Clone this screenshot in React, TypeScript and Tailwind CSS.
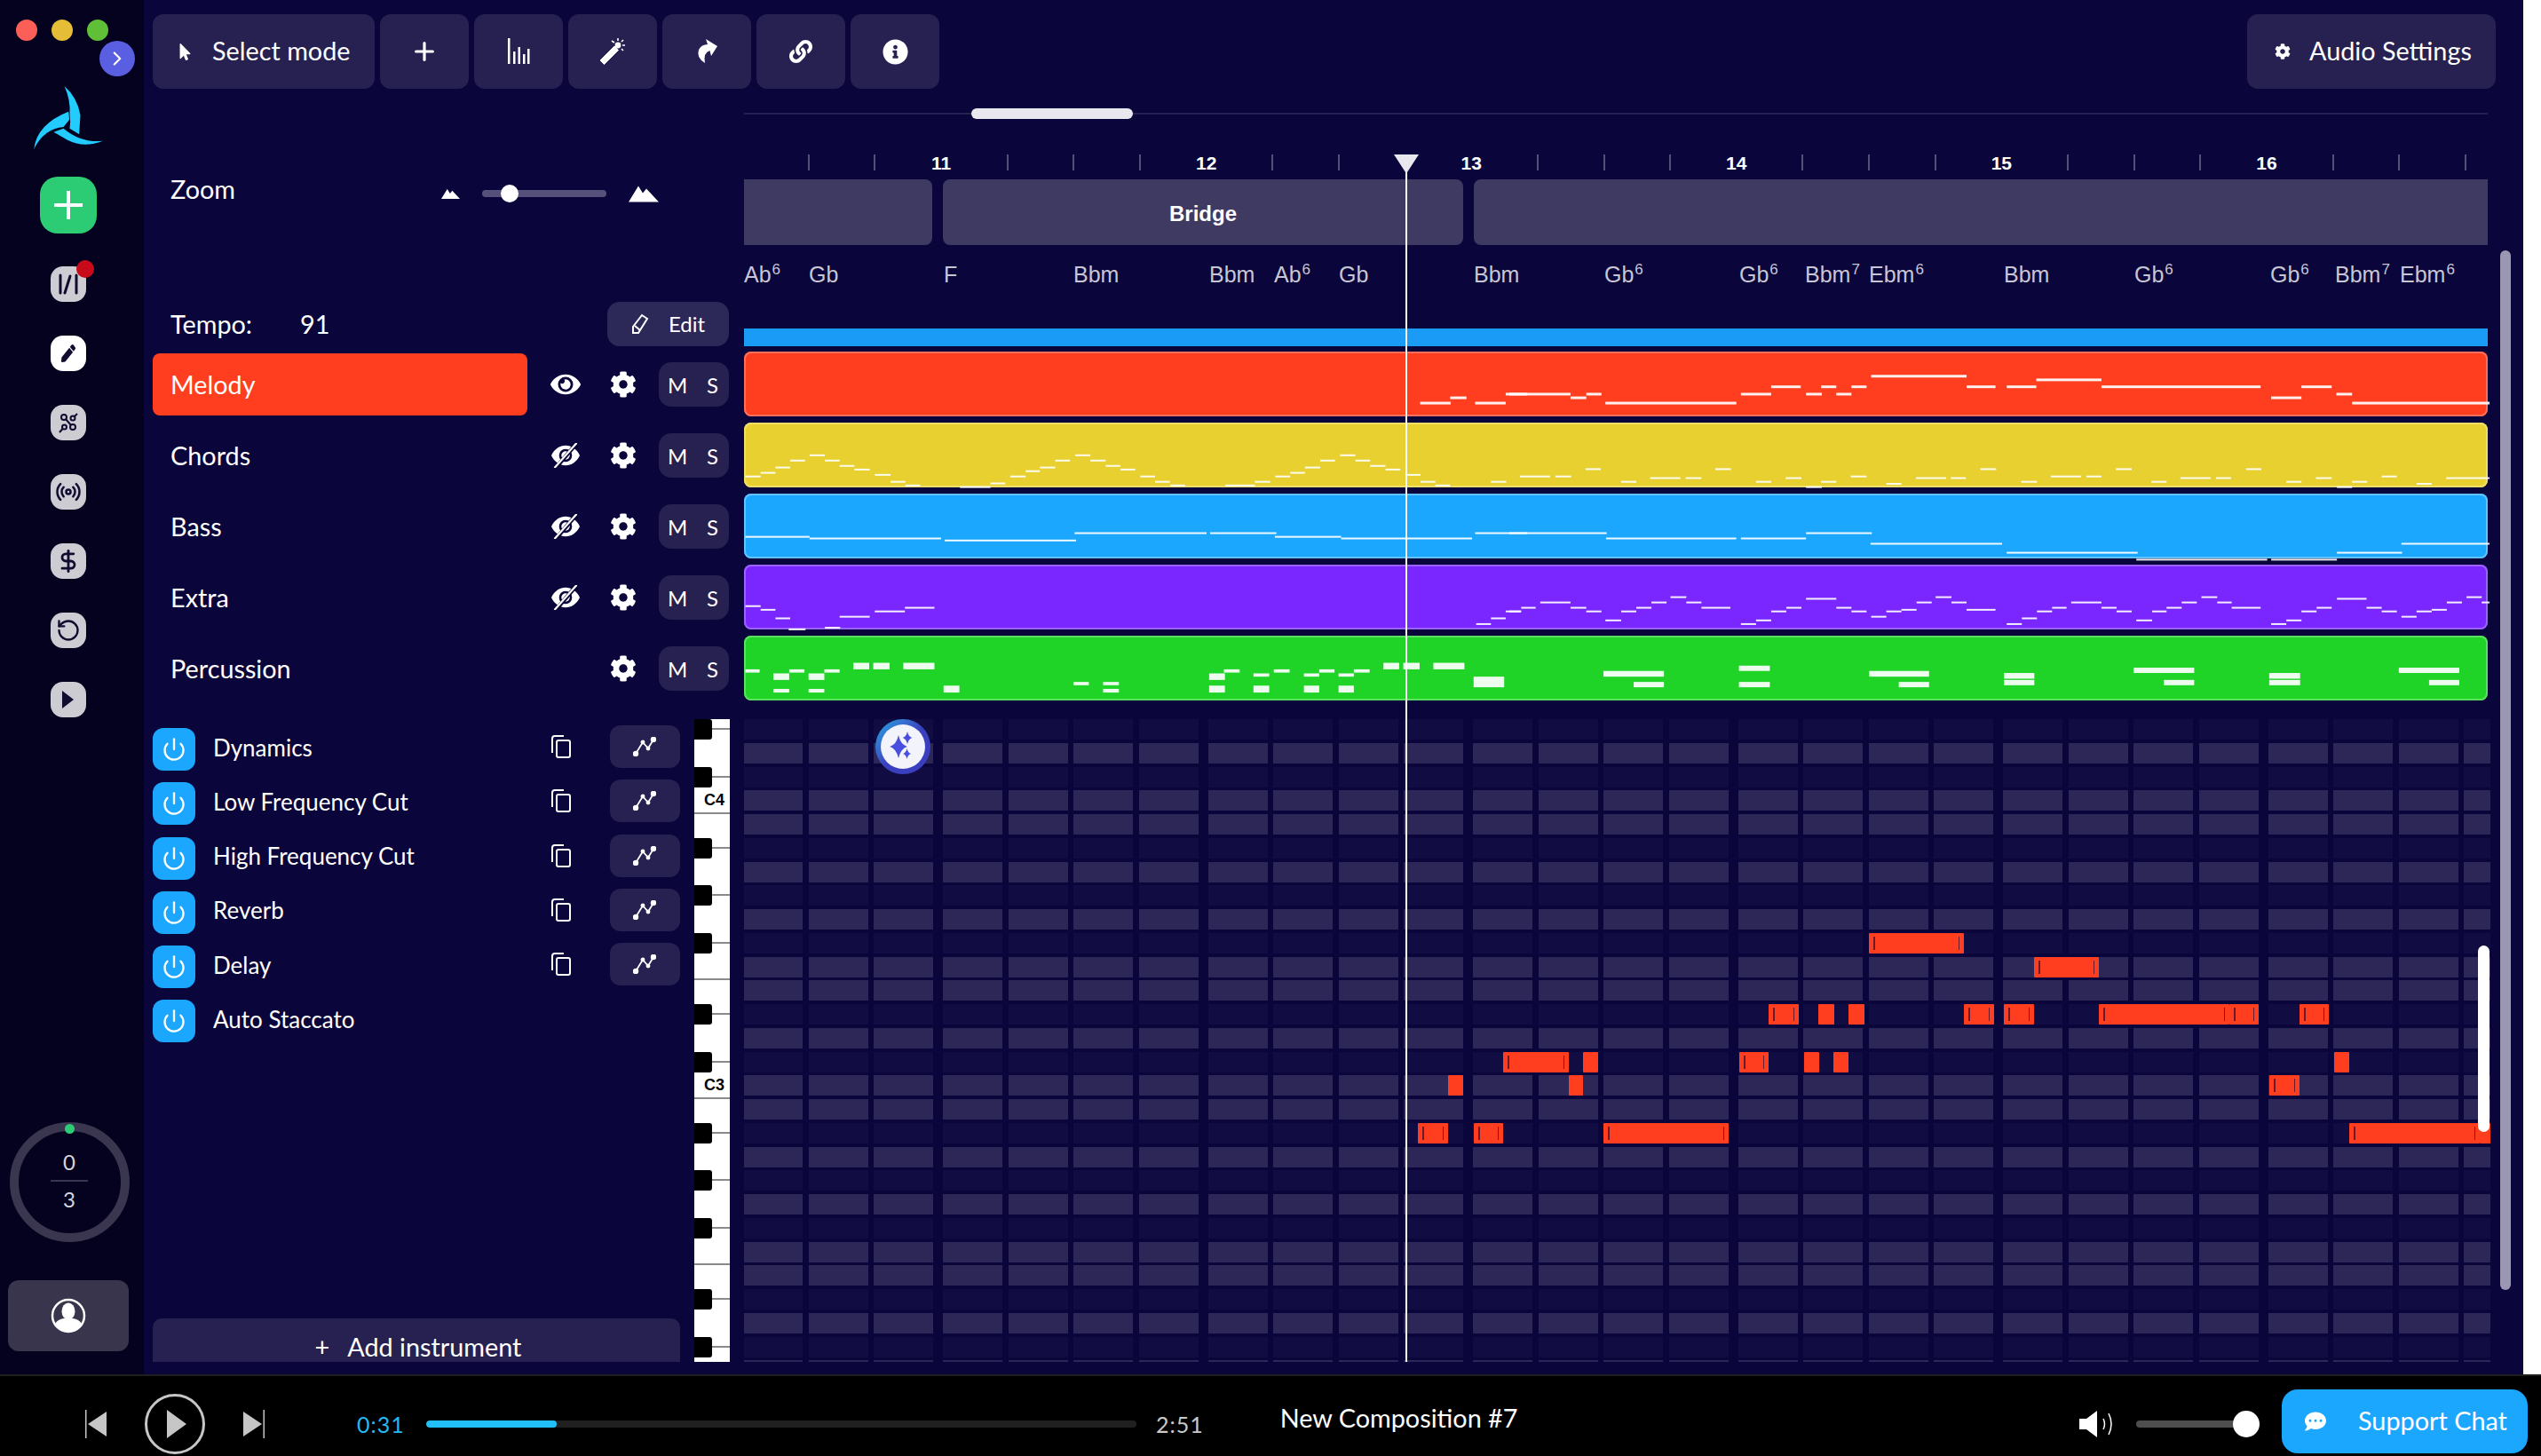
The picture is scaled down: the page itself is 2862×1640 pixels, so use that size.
import React from "react";
import { FaEye, FaCog, FaMousePointer, FaLink, FaInfoCircle, FaPen, FaCommentDots } from "react-icons/fa";
import { Radio, DollarSign, RotateCcw, Power, Plus, ChevronRight } from "lucide-react";

const zx4 = (z: number) => 820 + z * 0.574;
const zx5 = (z: number) => 1700 + z * 0.741;
const zy = (z: number) => 100 + z * 0.4592;

type N = [number, number, number];
type R = [number, number, number, number];

const melody4: N[] = [[1358,1418,771],[1417,1449,758],[1466,1526,771],[1526,1568,749]];
const melody5: N[] = [[0,93,749],[93,117,758],[117,140,749],[146,345,771],[352,398,749],[398,443,731],[451,475,749],[474,497,731],[497,520,749],[520,543,731],[550,695,705],[695,739,731],[756,801,731],[801,900,714],[900,1142,731],[1158,1204,758],[1204,1250,731],[1257,1281,749],[1281,1490,771]];
const chords4: N[] = [[34,64,951],[64,93,942],[93,122,929],[122,151,912],[160,190,899],[190,219,912],[219,248,925],[248,278,934],[288,319,947],[319,348,964],[348,377,973],[455,515,977],[515,544,968],[554,584,951],[584,612,938],[612,642,929],[642,671,912],[681,711,899],[711,741,912],[741,770,925],[770,799,934],[809,838,951],[838,867,964],[868,897,973],[976,1034,973],[1034,1064,964],[1074,1103,951],[1103,1132,942],[1132,1162,929],[1162,1191,912],[1201,1231,899],[1231,1260,912],[1260,1290,925],[1290,1319,934],[1329,1359,947],[1359,1388,964],[1388,1417,973],[1497,1527,964]];
const chords5: N[] = [[16,62,951],[70,94,951],[116,139,933],[170,193,964],[214,260,955],[268,292,955],[313,337,933],[375,398,964],[420,444,955],[451,475,977],[474,497,964],[519,543,951],[573,596,969],[618,664,955],[671,694,955],[716,740,933],[778,802,964],[823,869,951],[877,900,951],[922,946,933],[976,999,964],[1020,1066,955],[1074,1097,955],[1120,1143,933],[1181,1204,964],[1226,1250,955],[1258,1281,977],[1281,1304,964],[1326,1349,951],[1379,1402,969],[1424,1490,955]];
const bass4: N[] = [[34,160,1099],[160,418,1103],[425,683,1108],[680,939,1090],[946,1076,1090],[1073,1203,1099],[1203,1460,1103],[1466,1568,1090]];
const bass5: N[] = [[0,148,1090],[147,345,1103],[352,451,1103],[451,551,1090],[549,749,1116],[756,955,1138],[953,1152,1155],[1158,1258,1155],[1258,1357,1138],[1356,1490,1116]];
const extra4: N[] = [[34,64,1269],[64,93,1278],[93,122,1299],[119,152,1326],[190,220,1322],[219,278,1295],[288,347,1282],[347,405,1273],[1468,1497,1313],[1497,1526,1299],[1526,1556,1282]];
const extra5: N[] = [[0,18,1282],[18,40,1273],[47,93,1260],[93,117,1273],[117,140,1282],[146,170,1304],[170,193,1282],[193,216,1273],[216,239,1260],[245,269,1247],[269,292,1260],[292,336,1273],[352,375,1313],[375,398,1304],[398,421,1282],[421,444,1273],[451,497,1251],[497,520,1273],[520,543,1282],[550,573,1295],[573,596,1282],[596,619,1278],[619,642,1260],[648,672,1247],[672,695,1260],[695,739,1278],[756,779,1313],[779,802,1299],[802,825,1282],[825,847,1273],[854,900,1260],[900,923,1273],[923,946,1282],[953,977,1304],[977,999,1282],[999,1022,1273],[1022,1045,1260],[1052,1076,1247],[1076,1098,1260],[1098,1142,1273],[1158,1181,1313],[1181,1204,1304],[1204,1227,1282],[1227,1250,1273],[1258,1303,1251],[1303,1326,1273],[1326,1349,1282],[1356,1379,1295],[1379,1402,1282],[1402,1425,1278],[1425,1448,1260],[1455,1478,1247],[1478,1490,1260]];
const perc4: R[] = [[34,62,1424,1432],[89,120,1434,1450],[120,150,1424,1432],[158,189,1434,1450],[189,219,1424,1432],[246,277,1408,1424],[285,317,1408,1424],[344,405,1408,1424],[89,120,1472,1481],[158,189,1472,1481],[423,454,1464,1481],[678,708,1455,1463],[736,767,1455,1463],[736,767,1472,1481],[944,975,1434,1450],[973,1004,1424,1432],[1031,1062,1434,1442],[1071,1102,1424,1432],[1130,1160,1434,1442],[1160,1190,1424,1432],[1198,1228,1434,1442],[1228,1259,1424,1432],[1286,1317,1408,1424],[1325,1357,1408,1424],[1384,1445,1408,1424],[944,975,1464,1481],[1031,1062,1464,1481],[1130,1160,1464,1481],[1198,1228,1464,1481],[1463,1523,1442,1468]];
const perc5: R[] = [[143,235,1428,1442],[189,235,1455,1468],[349,396,1415,1428],[349,396,1455,1468],[547,638,1428,1442],[592,638,1455,1468],[752,798,1433,1447],[752,798,1450,1463],[949,1041,1420,1433],[995,1041,1450,1463],[1155,1202,1433,1447],[1155,1202,1450,1463],[1352,1444,1420,1433],[1398,1444,1450,1463]];

const toRects = (a: N[], b: N[], h: number) => [
  ...a.map(([x1, x2, y]) => ({ x: zx4(x1), w: zx4(x2) - zx4(x1), y: zy(y) - h / 2, h })),
  ...b.map(([x1, x2, y]) => ({ x: zx5(x1), w: zx5(x2) - zx5(x1), y: zy(y) - h / 2, h })),
];
const percRects = [
  ...perc4.map(([x1, x2, y1, y2]) => ({ x: zx4(x1), w: zx4(x2) - zx4(x1), y: zy(y1), h: zy(y2) - zy(y1) })),
  ...perc5.map(([x1, x2, y1, y2]) => ({ x: zx5(x1), w: zx5(x2) - zx5(x1), y: zy(y1), h: zy(y2) - zy(y1) })),
];

const tracks = [
  { y: 396, cls: "bg-[#ff3e20] ring-[#ff6f5c]", rects: toRects(melody4, melody5, 3) },
  { y: 476, cls: "bg-[#e8d030] ring-[#efdf68]", rects: toRects(chords4, chords5, 2) },
  { y: 556, cls: "bg-[#1ca7ff] ring-[#62c2ff]", rects: toRects(bass4, bass5, 2) },
  { y: 636, cls: "bg-[#7a27ff] ring-[#9a62ff]", rects: toRects(extra4, extra5, 2) },
  { y: 716, cls: "bg-[#1fd427] ring-[#5be062]", rects: percRects },
];

const notes: [number, number, number][] = [
  [9,2105,2212],[10,2291,2364],
  [12,1992,2026],[12,2048,2066],[12,2082,2100],[12,2212,2246],[12,2257,2291],[12,2364,2511],[12,2511,2544],[12,2590,2623],
  [14,1693,1767],[14,1783,1800],[14,1959,1992],[14,2032,2049],[14,2065,2082],[14,2629,2646],
  [15,1631,1648],[15,1767,1783],[15,2556,2590],
  [17,1597,1631],[17,1660,1693],[17,1806,1947],[17,2646,2793],[17,2793,2806],
];

const darkRows = new Set([0, 2, 5, 7, 9, 12, 14, 17, 19, 21, 24, 26]);
const lineRows = new Set([3, 10, 15, 22]);
const rows = Array.from({ length: 28 }, (_, i) => i);
const cols = Array.from({ length: 27 }, (_, i) => i);

const chords: { x: number; n: string; s?: string }[] = [
  { x: 838, n: "Ab", s: "6" }, { x: 911, n: "Gb" }, { x: 1063, n: "F" }, { x: 1209, n: "Bbm" }, { x: 1362, n: "Bbm" },
  { x: 1435, n: "Ab", s: "6" }, { x: 1508, n: "Gb" }, { x: 1660, n: "Bbm" }, { x: 1807, n: "Gb", s: "6" }, { x: 1959, n: "Gb", s: "6" },
  { x: 2033, n: "Bbm", s: "7" }, { x: 2105, n: "Ebm", s: "6" }, { x: 2257, n: "Bbm" }, { x: 2404, n: "Gb", s: "6" }, { x: 2557, n: "Gb", s: "6" },
  { x: 2630, n: "Bbm", s: "7" }, { x: 2703, n: "Ebm", s: "6" },
];

const Btn = ({ children, cls }: { children: React.ReactNode; cls?: string }) => (
  <div className={`h-[84px] rounded-[12px] bg-[#272152] flex items-center text-white ${cls ?? "w-[100px] justify-center"}`}>{children}</div>
);

const Mountains = ({ w, h }: { w: number; h: number }) => (
  <svg width={w} height={h} viewBox="0 0 34 18" fill="white"><path d="M0 18 L11 0 L16 8 L20 3 L34 18 Z" /></svg>
);

const EyeOff = () => (
  <svg width="34" height="28" viewBox="0 0 34 28">
    <path d="M1 14 C8 -1 26 -1 33 14 C26 29 8 29 1 14 Z" fill="white" />
    <circle cx="17" cy="14" r="6" fill="none" stroke="#0a053a" strokeWidth="2.6" />
    <path d="M6 28 L29 1" stroke="#0a053a" strokeWidth="4.4" />
    <path d="M5 27.5 L29 0.5" stroke="white" strokeWidth="2.2" strokeLinecap="round" />
  </svg>
);

const SideIcon = ({ children, white }: { children: React.ReactNode; white?: boolean }) => (
  <div className={`relative w-[40px] h-[40px] rounded-[14px] flex items-center justify-center text-[#100c30] ${white ? "bg-white" : "bg-[#cdccd2]"}`}>{children}</div>
);

const Track = ({ name, eye, active }: { name: string; eye?: "on" | "off"; active?: boolean }) => (
  <div className="flex items-center h-[70px] text-white">
    <div className={`w-[422px] h-[70px] rounded-[8px] pl-[20px] pt-[2px] flex items-center text-[28.8px] ${active ? "bg-[#ff3e20]" : ""}`}>{name}</div>
    <div className="ml-[26px] w-[34px] flex justify-center">
      {eye === "on" && <FaEye size={36} />}
      {eye === "off" && <EyeOff />}
    </div>
    <div className="ml-[32px] w-[32px] flex justify-center"><FaCog size={30} /></div>
    <div className="ml-[24px] w-[79px] h-[50px] rounded-[14px] bg-[#272152] flex items-center justify-between pl-[10px] pr-[12px] text-[24px] pt-[1px]">
      <span>M</span><span>S</span>
    </div>
  </div>
);

const Effect = ({ name, tools = true }: { name: string; tools?: boolean }) => (
  <div className="flex items-center h-[48px] text-white">
    <div className="w-[48px] h-[48px] rounded-[12px] bg-[#1ca7ff] flex items-center justify-center shrink-0"><Power size={28} strokeWidth={2} /></div>
    <div className="ml-[20px] text-[26px] w-[383px] mb-[4px]">{name}</div>
    {tools && (
      <>
        <div className="mb-[6px] w-[24px]">
          <svg width="24" height="26" viewBox="0 0 24 26" fill="none" stroke="white" strokeWidth="2">
            <rect x="7" y="6" width="15" height="19" rx="2" />
            <path d="M2 20 V4 Q2 1 5 1 H15" />
          </svg>
        </div>
        <div className="mb-[6px] ml-[43px] w-[80px] h-[48px] rounded-[12px] bg-[#272152] flex items-center justify-center">
          <svg width="26" height="22" viewBox="0 0 26 22" fill="none" stroke="white" strokeWidth="1.7">
            <path d="M3 19 L11 6 L17 13 L23 3" />
            <circle cx="3" cy="19" r="2.4" fill="white" /><circle cx="11" cy="6" r="1.6" fill="white" /><circle cx="17" cy="13" r="1.6" fill="white" /><circle cx="23" cy="3" r="2.4" fill="white" />
          </svg>
        </div>
      </>
    )}
  </div>
);

const Star = ({ cx, cy, r }: { cx: number; cy: number; r: number }) => (
  <path d={`M${cx} ${cy - r} Q${cx + r * 0.18} ${cy - r * 0.18} ${cx + r * 0.75} ${cy} Q${cx + r * 0.18} ${cy + r * 0.18} ${cx} ${cy + r} Q${cx - r * 0.18} ${cy + r * 0.18} ${cx - r * 0.75} ${cy} Q${cx - r * 0.18} ${cy - r * 0.18} ${cx} ${cy - r} Z`} />
);

export default function App() {
  return (
    <div className="relative w-[2862px] h-[1640px] overflow-hidden bg-white flex flex-col [font-family:Lato,sans-serif]">
      <div className="flex h-[1548px] w-[2842px]">
        {/* Sidebar */}
        <div className="relative w-[162px] shrink-0 bg-[#05021f] flex flex-col items-center pr-[8px]">
          <div className="self-start ml-[18px] mt-[22px] flex gap-[16px]">
            <div className="w-[24px] h-[24px] rounded-full bg-[#fb5f57]" />
            <div className="w-[24px] h-[24px] rounded-full bg-[#e6bd37]" />
            <div className="w-[24px] h-[24px] rounded-full bg-[#5fc038]" />
          </div>
          <div className="absolute left-[112px] top-[46px] w-[40px] h-[40px] rounded-full bg-[#5a5ee0] flex items-center justify-center text-white"><ChevronRight size={26} strokeWidth={2} /></div>
          <svg className="mt-[51px]" width="78" height="71" viewBox="115 52 233 213" fill="#22ccff">
            <path d="M218 52 Q262 90 272 150 L268 215 L236 195 Q240 170 236 150 Q240 100 218 52 Z" />
            <path d="M115 265 Q125 180 232 138 L235 165 L215 190 Q150 195 115 265 Z" />
            <path d="M348 237 Q285 262 230 235 L182 207 L215 195 Q275 245 348 237 Z" />
          </svg>
          <div className="mt-[31px] w-[64px] h-[64px] rounded-[20px] bg-[#2ccc75] flex items-center justify-center">
            <svg width="32" height="32" viewBox="0 0 32 32" fill="white"><rect x="14" y="0" width="4" height="32" /><rect x="0" y="14" width="32" height="4" /></svg>
          </div>
          <div className="mt-[37px] flex flex-col gap-[38px]">
            <SideIcon>
              <svg width="24" height="24" viewBox="0 0 24 24" fill="none" stroke="#100c30" strokeWidth="3" strokeLinecap="round"><path d="M3 2 V22" /><path d="M14 3 L8 22" /><path d="M21 2 V22" /></svg>
              <div className="absolute -top-[7px] -right-[9px] w-[20px] h-[20px] rounded-full bg-[#c90a1b]" />
            </SideIcon>
            <SideIcon white><FaPen size={20} className="scale-x-[0.8]" /></SideIcon>
            <SideIcon>
              <svg width="24" height="24" viewBox="0 0 24 24" fill="none" stroke="#100c30" strokeWidth="2"><circle cx="7" cy="6" r="3" /><circle cx="17" cy="7" r="2.5" /><circle cx="7.5" cy="17" r="2.5" /><circle cx="17" cy="17" r="3" /><path d="M9 8 L15 15" /><path d="M19 5 L22 2" /><path d="M5.5 19 L2 23" /></svg>
            </SideIcon>
            <SideIcon><Radio size={30} strokeWidth={2} /></SideIcon>
            <SideIcon><DollarSign size={28} strokeWidth={2.4} /></SideIcon>
            <SideIcon><RotateCcw size={28} strokeWidth={2} /></SideIcon>
            <SideIcon><svg width="14" height="20" viewBox="0 0 14 20" fill="#100c30"><path d="M0 0 L13 10 L0 20 Z" /></svg></SideIcon>
          </div>
          <div className="relative mt-auto w-[135px] h-[135px] rounded-full border-[10px] border-[#3a3650] flex flex-col items-center justify-center text-[#d6d5dc] text-[24px] leading-none ml-[2px] pb-[3px]">
            <div className="absolute -top-[8px] w-[11px] h-[11px] rounded-full bg-[#2ccc75]" />
            <span>0</span>
            <div className="w-[42px] h-[2px] bg-[#3a3650] my-[8px]" />
            <span>3</span>
          </div>
          <div className="mt-[43px] mb-[26px] w-[136px] h-[80px] rounded-[12px] bg-[#39354d] flex items-center justify-center">
            <svg width="40" height="40" viewBox="0 0 40 40">
              <circle cx="20" cy="20" r="18" fill="none" stroke="white" strokeWidth="2.5" />
              <ellipse cx="20" cy="15" rx="7.5" ry="9.5" fill="white" />
              <path d="M5 29 Q8 24 15 23 H25 Q32 24 35 29 Q29 38 20 38 Q11 38 5 29 Z" fill="white" />
            </svg>
          </div>
        </div>

        {/* Main */}
        <div className="flex-1 min-w-0 bg-[#0a053a] flex flex-col">
          {/* Toolbar */}
          <div className="h-[100px] pt-[16px] pl-[10px] pr-[31px] flex gap-[6px]">
            <Btn cls="w-[250px] pl-[27px] gap-[21px] text-[28.8px]">
              <FaMousePointer size={19} />
              <span>Select mode</span>
            </Btn>
            <Btn><Plus size={32} strokeWidth={2.4} /></Btn>
            <Btn>
              <svg width="26" height="30" viewBox="0 0 26 30" fill="white"><rect x="1" y="0" width="2.5" height="29" /><rect x="7" y="15" width="2.5" height="14" /><rect x="12.5" y="10" width="2.5" height="19" /><rect x="18" y="18" width="2.5" height="11" /><rect x="23" y="12" width="2.5" height="17" /></svg>
            </Btn>
            <Btn>
              <svg width="30" height="30" viewBox="0 0 30 30" fill="white" stroke="white">
                <path d="M1 25 L17 9 L21.5 13.5 L5.5 29.5 Z" strokeWidth="1" />
                <circle cx="21" cy="8" r="3.4" strokeWidth="0" />
                <path d="M21 0 V3 M27 2 L25 4 M29 8 H26 M27 14 L25 12 M14 3 L17 5" strokeWidth="1.6" fill="none" />
              </svg>
            </Btn>
            <Btn>
              <svg width="24" height="28" viewBox="0 0 24 28" fill="white"><path d="M11 0 L24 8 L17 19 L15.5 13 Q8 15 10 27 Q0 21 3 12 Q6 6 13 6 Z" /></svg>
            </Btn>
            <Btn><FaLink size={26} /></Btn>
            <Btn><FaInfoCircle size={29} /></Btn>
            <Btn cls="ml-auto w-[280px] pl-[31px] gap-[21px] text-[28.8px]">
              <FaCog size={18} />
              <span>Audio Settings</span>
            </Btn>
          </div>

          <div className="flex-1 flex min-w-0">
            {/* Left panel */}
            <div className="w-[676px] shrink-0 pl-[10px] flex flex-col">
              <div className="mt-[98px] h-[40px] pl-[20px] pr-[96px] flex items-center text-white text-[28.8px]">
                <span className="mb-[8px]">Zoom</span>
                <div className="ml-auto"><Mountains w={21} h={13} /></div>
                <div className="relative ml-[25px] w-[140px] h-[8px] rounded-full bg-[#56517a]">
                  <div className="absolute left-[21px] -top-[6px] w-[20px] h-[20px] rounded-full bg-white" />
                </div>
                <div className="ml-[25px]"><Mountains w={34} h={19} /></div>
              </div>
              <div className="mt-[102px] h-[50px] pl-[20px] pr-[17px] flex items-center text-white text-[28.8px]">
                <span className="w-[146px] pt-[1px]">Tempo:</span>
                <span className="pt-[1px]">91</span>
                <div className="ml-auto w-[137px] h-[50px] rounded-[14px] bg-[#2c2858] flex items-center justify-center gap-[22px] text-[24px]">
                  <svg width="20" height="24" viewBox="0 0 20 24" fill="none" stroke="white" strokeWidth="2"><path d="M12 2 L18 6 L8 22 H2 V15 Z" /><path d="M4 14 L10 19" /></svg>
                  <span>Edit</span>
                </div>
              </div>
              <div className="mt-[8px] pr-[17px] flex flex-col gap-[10px]">
                <Track name="Melody" eye="on" active />
                <Track name="Chords" eye="off" />
                <Track name="Bass" eye="off" />
                <Track name="Extra" eye="off" />
                <Track name="Percussion" />
              </div>
              <div className="mt-[22px] h-[724px] flex">
                <div className="w-[594px] flex flex-col">
                  <div className="pt-[10px] flex flex-col gap-[13.3px]">
                    <Effect name="Dynamics" />
                    <Effect name="Low Frequency Cut" />
                    <Effect name="High Frequency Cut" />
                    <Effect name="Reverb" />
                    <Effect name="Delay" />
                    <Effect name="Auto Staccato" tools={false} />
                  </div>
                  <div className="mt-auto h-[49px] rounded-t-[10px] bg-[#272152] flex items-center justify-center gap-[20px] text-white text-[28.8px] pt-[16px] pl-[4px]">
                    <span>+</span><span>Add instrument</span>
                  </div>
                </div>
                <div className="ml-[16px] w-[40px] h-[724px] bg-white overflow-hidden flex flex-col">
                  {rows.map((r) => (
                    <div key={r} className={`h-[26.75px] shrink-0 flex items-start box-border ${lineRows.has(r) ? "border-b-2 border-[#8a8a8a]" : ""}`}>
                      {darkRows.has(r) && (
                        <>
                          <div className="w-[20px] h-[23px] bg-black rounded-r-[3px]" />
                          <div className="flex-1 h-[2px] mt-[10px] bg-[#8a8a8a]" />
                        </>
                      )}
                      {r === 3 && <div className="w-full pr-[6px] text-right text-[18px] leading-[22px] font-bold text-black [font-family:'Liberation_Sans',sans-serif]">C4</div>}
                      {r === 15 && <div className="w-full pr-[6px] text-right text-[18px] leading-[22px] font-bold text-black [font-family:'Liberation_Sans',sans-serif]">C3</div>}
                    </div>
                  ))}
                </div>
              </div>
            </div>

            {/* Timeline */}
            <div className="relative flex-1 min-w-0 pr-[40px] flex flex-col [font-family:'Liberation_Sans',sans-serif]">
              <div className="relative mt-[27px] h-[2px] bg-[#272152]">
                <div className="absolute left-[256px] -top-[5px] w-[182px] h-[12px] rounded-full bg-[#e8e8ee]" />
              </div>
              <div className="mt-[45px] h-[28px] flex text-white">
                {Array.from({ length: 26 }, (_, i) => i).map((i) => (
                  <div key={i} className={`w-[74.65px] shrink-0 flex justify-center ${i === 0 ? "ml-[35.5px]" : ""}`}>
                    {i % 4 === 2 ? (
                      <span className="text-[21px] leading-[22px] font-bold mt-[-1px]">{11 + (i - 2) / 4}</span>
                    ) : (
                      <div className="w-[2px] h-[18px] bg-[#55507a]" />
                    )}
                  </div>
                ))}
              </div>
              <div className="h-[74px] flex gap-[12px] text-white text-[24px] font-bold">
                <div className="w-[212px] rounded-r-[8px] bg-[#3f3a62]" />
                <div className="w-[586px] rounded-[8px] bg-[#3f3a62] flex items-center justify-center pt-[3px]">Bridge</div>
                <div className="flex-1 rounded-l-[8px] bg-[#3f3a62]" />
              </div>
              <div className="h-[94px] flex text-[#c8c6d4] text-[25px] leading-[30px] pt-[18px]">
                {chords.map((c, i) => (
                  <div key={i} className="shrink-0 relative" style={{ width: (i < chords.length - 1 ? chords[i + 1].x : 2802) - c.x }}>
                    {c.n}
                    {c.s && <sup className="text-[17px] leading-none align-baseline relative -top-[9px] ml-[1px]">{c.s}</sup>}
                  </div>
                ))}
              </div>
              <div className="h-[20px] bg-[#1a9bf5]" />
              <div className="mt-[6px] flex flex-col gap-[7px]">
                {tracks.map((t) => (
                  <div key={t.y} className={`relative h-[73px] rounded-[8px] ring-2 ring-inset ${t.cls}`}>
                    <svg className="absolute left-0 top-0 overflow-visible" width="1964" height="73" viewBox={`838 ${t.y} 1964 73`} fill="white">
                      {t.rects.map((r, i) => <rect key={i} x={r.x} y={r.y} width={r.w} height={r.h} opacity={0.92} />)}
                    </svg>
                  </div>
                ))}
              </div>
              {/* Piano roll */}
              <div className="relative mt-[21px] w-[1967px] h-[724px] overflow-hidden flex flex-col">
                {rows.map((r) => (
                  <div key={r} className="h-[26.75px] shrink-0 flex">
                    {cols.map((c) => (
                      <div key={c} className={`h-[23px] shrink-0 ${c === 0 ? "w-[66px]" : "w-[67px]"} ${c % 4 === 2 ? "mr-[11px]" : "mr-[6.5px]"} ${darkRows.has(r) ? "bg-[#110c42]" : "bg-[#2d2757]"}`} />
                    ))}
                  </div>
                ))}
                {notes.map(([r, x1, x2], i) => (
                  <div key={i} className="absolute h-[23px] rounded-[1px] bg-[#ff3e20] flex items-center justify-between px-[5px]" style={{ left: x1 - 838, top: r * 26.75, width: x2 - x1 }}>
                    {x2 - x1 > 25 && (
                      <>
                        <div className="w-[1.5px] h-[15px] bg-[#6b1a2a]" />
                        <div className="w-[1.5px] h-[15px] bg-[#6b1a2a]" />
                      </>
                    )}
                  </div>
                ))}
                <div className="absolute left-[148px] top-0 w-[62px] h-[62px] rounded-full bg-gradient-to-br from-[#1fa8e0] via-[#3a3fc0] to-[#3a3fc0] flex items-center justify-center">
                  <div className="w-[50px] h-[50px] rounded-full bg-[#f3f3fb] flex items-center justify-center">
                    <svg width="34" height="34" viewBox="0 0 34 34" fill="#4a4ee0">
                      <Star cx={12} cy={17} r={13} />
                      <Star cx={22} cy={7} r={7} />
                      <Star cx={21.5} cy={25} r={6} />
                    </svg>
                  </div>
                </div>
                <div className="absolute left-[1953px] top-[255px] w-[13px] h-[210px] rounded-full bg-white" />
              </div>
              {/* Overlays */}
              <div className="absolute left-[745px] top-[92px] w-[2px] h-[1342px] bg-white" />
              <svg className="absolute left-[732px] top-[74px]" width="28" height="20" viewBox="0 0 28 20" fill="#e8e8ee"><path d="M0 0 H28 L15 20 H13 Z" /></svg>
              <div className="absolute left-[1978px] top-[182px] w-[12px] h-[1171px] rounded-full bg-[#9b97b2]" />
            </div>
          </div>
        </div>
      </div>

      {/* Bottom bar */}
      <div className="h-[92px] bg-black border-t-2 border-[#1f1f1f] flex items-center relative pt-[18px]">
        <svg className="ml-[96px]" width="24" height="32" viewBox="0 0 24 32" fill="#c6c6c6"><rect x="0" y="0" width="1.5" height="32" /><path d="M24 2 V30 L3 16 Z" /></svg>
        <div className="ml-[43px] w-[68px] h-[68px] rounded-full border-[3px] border-[#c6c6c6] flex items-center justify-center pl-[4px]">
          <svg width="22" height="32" viewBox="0 0 22 32" fill="#c6c6c6"><path d="M0 0 L22 16 L0 32 Z" /></svg>
        </div>
        <svg className="ml-[43px]" width="24" height="32" viewBox="0 0 24 32" fill="#c6c6c6"><rect x="22.5" y="0" width="1.5" height="32" /><path d="M0 2 V30 L21 16 Z" /></svg>
        <span className="ml-[104px] w-[78px] text-[25px] tracking-[1px] text-[#22b8f0] mb-[-2px]">0:31</span>
        <div className="w-[800px] h-[8px] rounded-full bg-[#202020] overflow-hidden">
          <div className="w-[147px] h-[8px] rounded-full bg-[#22c0f8]" />
        </div>
        <span className="ml-[22px] text-[25px] tracking-[1px] text-[#c9c9c9] mb-[-2px]">2:51</span>
        <span className="ml-[86px] text-[28.8px] text-white mb-[12px]">New Composition #7</span>
        <div className="ml-auto flex items-center">
          <svg width="42" height="30" viewBox="0 0 42 30" fill="none"><path d="M0 9 H8 L20 0 V30 L8 21 H0 Z" fill="white" /><path d="M27 9 Q30 15 27 21" stroke="white" strokeWidth="1.5" /><path d="M33 3 Q39 15 33 27" stroke="white" strokeWidth="1.5" /></svg>
          <div className="relative ml-[22px] w-[124px] h-[8px] rounded-full bg-[#4e4e4e]">
            <div className="absolute -right-[15px] -top-[11px] w-[30px] h-[30px] rounded-full bg-white" />
          </div>
          <div className="ml-[40px] mr-[15px] mb-[6px] w-[277px] h-[72px] rounded-[18px] bg-[#1ca7ff] flex items-center text-white text-[28.8px] pl-[26px] gap-[36px]">
            <FaCommentDots size={24} />
            <span>Support Chat</span>
          </div>
        </div>
      </div>
    </div>
  );
}
